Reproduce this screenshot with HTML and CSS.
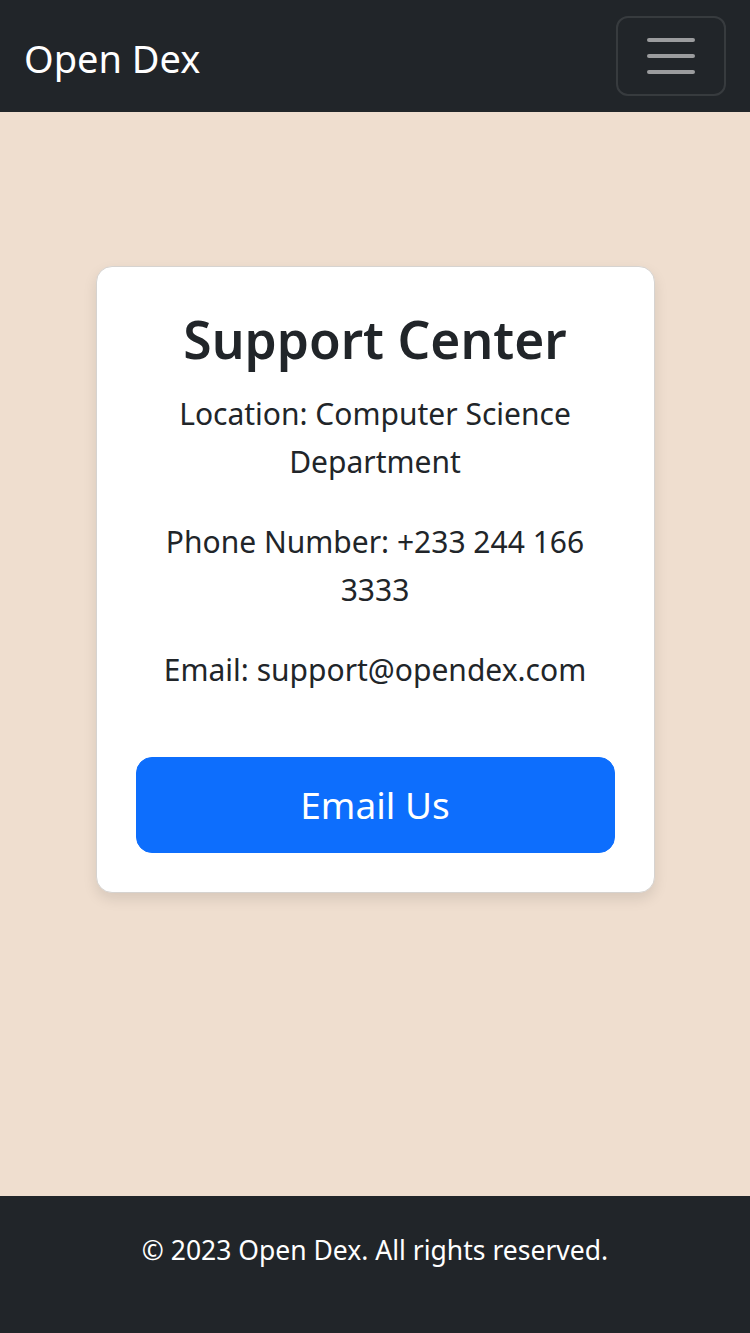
FILE: index.html
```html
<!DOCTYPE html>
<html lang="en">
<head>
<meta charset="utf-8">
<title>Open Dex - Support</title>
<link rel="stylesheet" href="styles.css">
</head>
<body>
<nav class="navbar">
  <a class="brand" href="#">Open Dex</a>
  <button class="toggler" aria-label="Toggle navigation">
    <span class="bar"></span><span class="bar"></span><span class="bar"></span>
  </button>
</nav>
<main class="main">
  <section class="card">
    <h2 class="title">Support Center</h2>
    <p class="info">Location: Computer Science Department</p>
    <p class="info">Phone Number: +233 244 166 3333</p>
    <p class="info">Email: support@opendex.com</p>
    <a class="btn" href="#">Email Us</a>
  </section>
</main>
<footer class="footer">
  <p class="copy">© 2023 Open Dex. All rights reserved.</p>
</footer>
</body>
</html>
```
FILE: styles.css
```css
* { box-sizing: border-box; }
html, body { margin: 0; padding: 0; }
body {
  font-family: "Segoe UI", "Noto Sans", "Open Sans", sans-serif;
  color: #212529;
  background: #efdecf;
  min-height: 100vh;
  display: flex;
  flex-direction: column;
}
.navbar {
  height: 112px;
  background: #212529;
  display: flex;
  align-items: center;
  justify-content: space-between;
  padding: 0 24px;
}
.brand {
  color: #fff;
  text-decoration: none;
  font-size: 38px;
  line-height: 60px;
  margin-top: 4px;
}
.toggler {
  width: 110px;
  height: 80px;
  background: transparent;
  border: 2px solid rgba(255,255,255,0.1);
  border-radius: 12px;
  display: flex;
  flex-direction: column;
  align-items: center;
  justify-content: center;
  gap: 12px;
  padding: 0;
}
.bar {
  display: block;
  width: 48px;
  height: 4px;
  border-radius: 2px;
  background: #9b9c9e;
}
.main {
  flex: 1;
  padding-top: 154px;
  display: flex;
  flex-direction: column;
  align-items: center;
}
.card {
  width: 559px;
  background: #fff;
  border: 1px solid #d6d3d0;
  border-radius: 16px;
  box-shadow: 0 6px 14px rgba(0,0,0,0.1);
  padding: 39px;
  text-align: center;
}
.title {
  margin: 0 0 17px;
  font-size: 51.5px;
  line-height: 67px;
  font-weight: 600;
}
.info {
  margin: 0 0 32px;
  font-size: 30px;
  line-height: 48px;
}
.btn {
  display: block;
  margin-top: 63px;
  height: 96px;
  line-height: 94px;
  background: #0d6efd;
  border: 1px solid #0d6efd;
  border-radius: 16px;
  color: #fff;
  text-decoration: none;
  font-size: 37px;
}
.footer {
  background: #212529;
  color: #fff;
  text-align: center;
  height: 137px;
  padding-top: 33px;
}
.copy {
  margin: 0;
  font-size: 26.5px;
  line-height: 42px;
}
```
